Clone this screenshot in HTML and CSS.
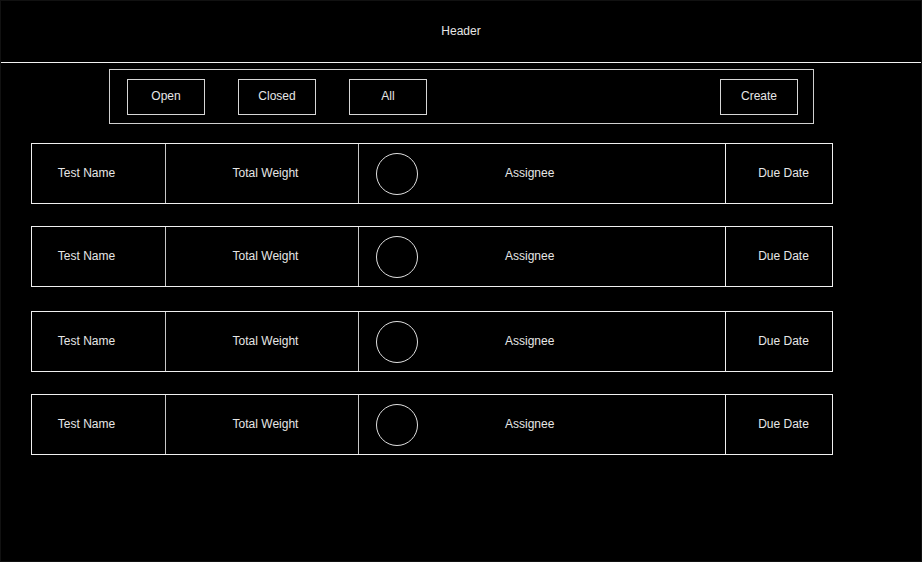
FILE: index.html
```html
<!DOCTYPE html>
<html>
<head>
<meta charset="utf-8">
<link rel="stylesheet" href="styles.css">
</head>
<body>
<div class="frame">
  <header class="header">Header</header>
  <div class="toolbar">
    <button class="btn">Open</button>
    <button class="btn">Closed</button>
    <button class="btn">All</button>
    <span class="spacer"></span>
    <button class="btn">Create</button>
  </div>
  <div class="list">
    <div class="row">
      <div class="cell c-name">Test Name</div>
      <div class="cell c-weight">Total Weight</div>
      <div class="cell c-assignee"><span class="avatar"></span><span class="assignee-label">Assignee</span></div>
      <div class="cell c-due">Due Date</div>
    </div>
    <div class="row">
      <div class="cell c-name">Test Name</div>
      <div class="cell c-weight">Total Weight</div>
      <div class="cell c-assignee"><span class="avatar"></span><span class="assignee-label">Assignee</span></div>
      <div class="cell c-due">Due Date</div>
    </div>
    <div class="row row-shift">
      <div class="cell c-name">Test Name</div>
      <div class="cell c-weight">Total Weight</div>
      <div class="cell c-assignee"><span class="avatar"></span><span class="assignee-label">Assignee</span></div>
      <div class="cell c-due">Due Date</div>
    </div>
    <div class="row">
      <div class="cell c-name">Test Name</div>
      <div class="cell c-weight">Total Weight</div>
      <div class="cell c-assignee"><span class="avatar"></span><span class="assignee-label">Assignee</span></div>
      <div class="cell c-due">Due Date</div>
    </div>
  </div>
</div>
</body>
</html>
```

FILE: styles.css
```css
* { box-sizing: border-box; }
html, body { margin: 0; padding: 0; background: #000; }
body {
  font-family: "Liberation Sans", Arial, sans-serif;
  font-size: 12px;
  color: #e6e6e6;
}
.frame {
  width: 922px;
  height: 562px;
  border: 1px solid #111;
  background: #000;
  display: flex;
  flex-direction: column;
}
.header {
  height: 62px;
  border-bottom: 1px solid #f2f2f2;
  display: flex;
  align-items: center;
  justify-content: center;
  padding-bottom: 1px;
}
.toolbar {
  margin: 6px 0 0 108px;
  width: 705px;
  height: 55px;
  border: 1px solid #d0d0d0;
  display: flex;
  align-items: flex-start;
  padding: 9px 15px 0 17px;
  gap: 33px;
}
.spacer { flex: 1; }
.btn {
  width: 78px;
  height: 36px;
  background: #000;
  border: 1px solid #d6d6d6;
  color: #e6e6e6;
  font-family: "Liberation Sans", Arial, sans-serif;
  font-size: 12px;
  padding: 0 0 2px 0;
  margin: 0;
}
.list {
  margin: 19px 0 0 30px;
  display: flex;
  flex-direction: column;
  gap: 22px;
}
.row {
  width: 802px;
  height: 61px;
  border: 1px solid #f0f0f0;
  display: grid;
  grid-template-columns: 134px 193px 367px 106px;
}
.row-shift { margin-top: 2px; }
.cell {
  display: flex;
  align-items: center;
  border-right: 1px solid #c8c8c8;
  padding-bottom: 2px;
}
.c-name { justify-content: center; padding-right: 24px; }
.c-weight { justify-content: center; padding-left: 7px; }
.c-assignee { padding-left: 17px; padding-bottom: 0; border-right-color: #f0f0f0; }
.c-assignee .assignee-label { margin-top: -2px; }
.c-due { justify-content: center; padding-left: 9px; border-right: none; }
.avatar {
  width: 42px;
  height: 42px;
  border: 1px solid #e0e0e0;
  border-radius: 50%;
  flex: none;
}
.assignee-label { margin-left: 87px; }
```
